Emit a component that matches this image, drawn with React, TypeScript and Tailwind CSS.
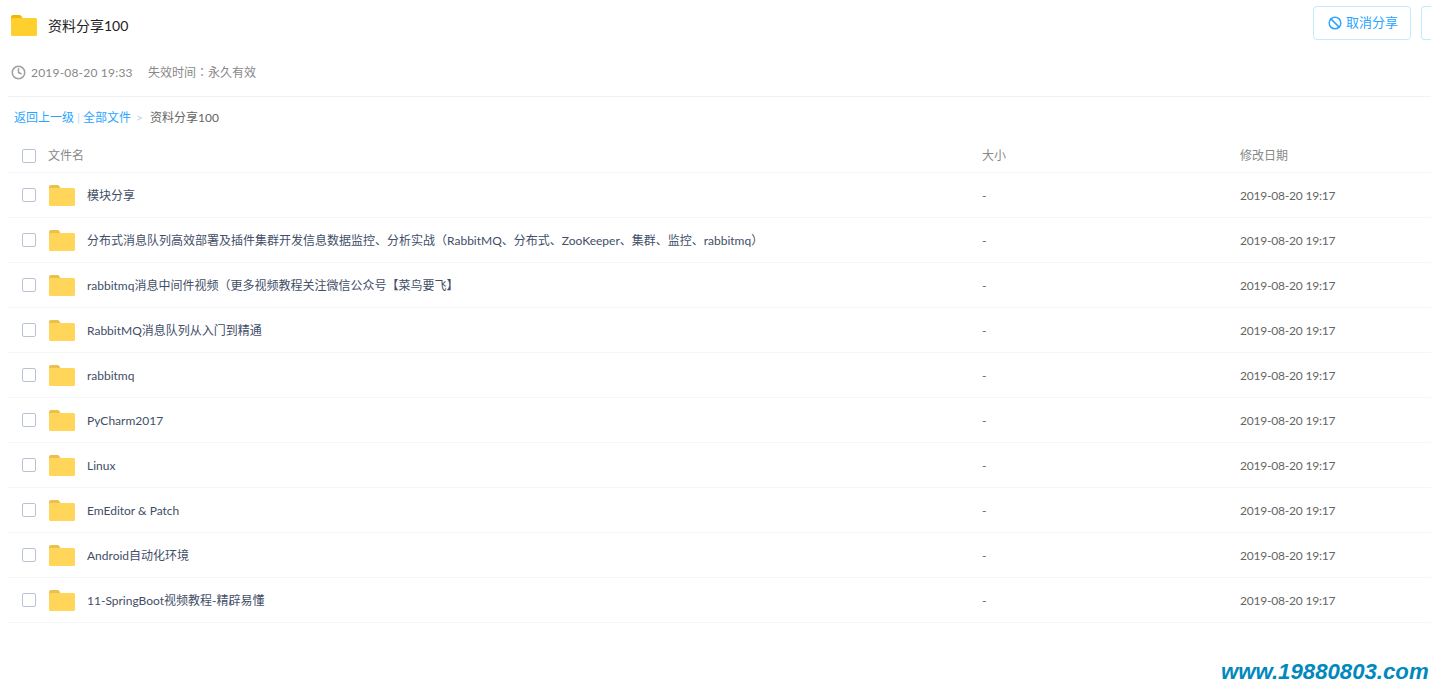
import { Ban, Clock } from "lucide-react"

const rows = [
  "模块分享",
  "分布式消息队列高效部署及插件集群开发信息数据监控、分析实战（RabbitMQ、分布式、ZooKeeper、集群、监控、rabbitmq）",
  "rabbitmq消息中间件视频（更多视频教程关注微信公众号【菜鸟要飞】",
  "RabbitMQ消息队列从入门到精通",
  "rabbitmq",
  "PyCharm2017",
  "Linux",
  "EmEditor & Patch",
  "Android自动化环境",
  "11-SpringBoot视频教程-精辟易懂",
]

const Folder = ({ back, front, className }: { back: string; front: string; className: string }) => (
  <svg viewBox="0 0 26 21" className={className}>
    <path d="M0 2a2 2 0 0 1 2-2h6.5a2 2 0 0 1 1.6.8L11.5 3H2v4H0z" fill={back} />
    <rect x="0" y="3" width="26" height="18" rx="1.5" fill={front} />
  </svg>
)

const Check = () => <div className="h-[14px] w-[14px] shrink-0 rounded-[2px] border border-[#b9c3d3] bg-white" />

// full-width punctuation sits centred in the reference, the TC cut does that
const Punct = ({ text }: { text: string }) => (
  <>
    {text.split(/([（）：])/).map((part, i) =>
      i % 2 === 1 ? (
        <span key={i} className="font-['Noto_Sans_CJK_TC',sans-serif] leading-[12px]">
          {part}
        </span>
      ) : (
        part
      )
    )}
  </>
)

const App = () => {
  return (
    <div className="relative h-[679px] w-[1431px] overflow-hidden bg-white font-['Lato','Noto_Sans_CJK_SC',sans-serif] text-xs text-[#666]">
      <div className="flex h-[50px] items-start justify-between pl-[11px] pt-[6px]">
        <div className="flex items-center pt-[8px]">
          <Folder back="#f4b400" front="#ffcf2e" className="h-[21px] w-[26px]" />
          <span className="ml-[11px] pt-[2px] text-sm text-[#222]">资料分享100</span>
        </div>
        <div className="flex gap-[10px]">
          <button className="flex h-[34px] w-[98px] items-center gap-[4px] rounded-[4px] border border-[#c3eaff] pl-[14px] text-[13px] text-[#2aa6ff]">
            <Ban size={14} strokeWidth={2.5} />
            取消分享
          </button>
          <div className="h-[34px] w-[10px] shrink-0 rounded-l-[4px] border border-r-0 border-[#c3eaff]" />
        </div>
      </div>
      <div className="ml-[8px] flex h-[47px] items-center border-b border-[#f2f2f2] pb-[2px] pl-[3px] text-[#888]">
        <Clock size={15} strokeWidth={2.5} className="text-[#a0a0a0]" />
        <span className="ml-[5px] w-[117px] pt-[2px] tracking-[0.2px]">2019-08-20 19:33</span>
        <span className="pt-[2px] leading-[16px]">
          <Punct text="失效时间：永久有效" />
        </span>
      </div>
      <div className="flex h-[40px] items-center pl-[14px] pt-[2px]">
        <span className="text-[#2aa6ff]">返回上一级</span>
        <span className="mx-[3px] text-[#c3daf5]">|</span>
        <span className="text-[#2aa6ff]">全部文件</span>
        <span className="ml-[5px] mr-[7px] text-[#c5d0de]">&gt;</span>
        <span className="text-[#666]">资料分享100</span>
      </div>
      <div className="ml-[8px] flex h-[36px] items-center border-b border-[#f5f6f9] pl-[14px] pt-[2px] text-[#888]">
        <Check />
        <span className="ml-[12px] w-[934px]">文件名</span>
        <span className="w-[258px]">大小</span>
        <span>修改日期</span>
      </div>
      {rows.map((name, index) => (
        <div key={index} className="ml-[8px] flex h-[45px] items-center border-b border-[#f5f6f9] pl-[14px]">
          <Check />
          <Folder back="#ecc04f" front="#ffd659" className="ml-[13px] h-[21px] w-[26px] shrink-0" />
          <span className="ml-[12px] w-[895px] whitespace-nowrap pt-[2px] leading-[16px] text-[#424e67]">
            <Punct text={name} />
          </span>
          <span className="w-[258px] pt-[2px]">-</span>
          <span className="pt-[2px] tracking-[-0.2px]">2019-08-20 19:17</span>
        </div>
      ))}
      <div className="absolute left-[1221px] top-[658px] whitespace-nowrap font-['Liberation_Sans',sans-serif] text-[22.2px] font-bold italic leading-[28px] text-[#0189bd]">
        www.19880803.com
      </div>
    </div>
  )
}

export default App
